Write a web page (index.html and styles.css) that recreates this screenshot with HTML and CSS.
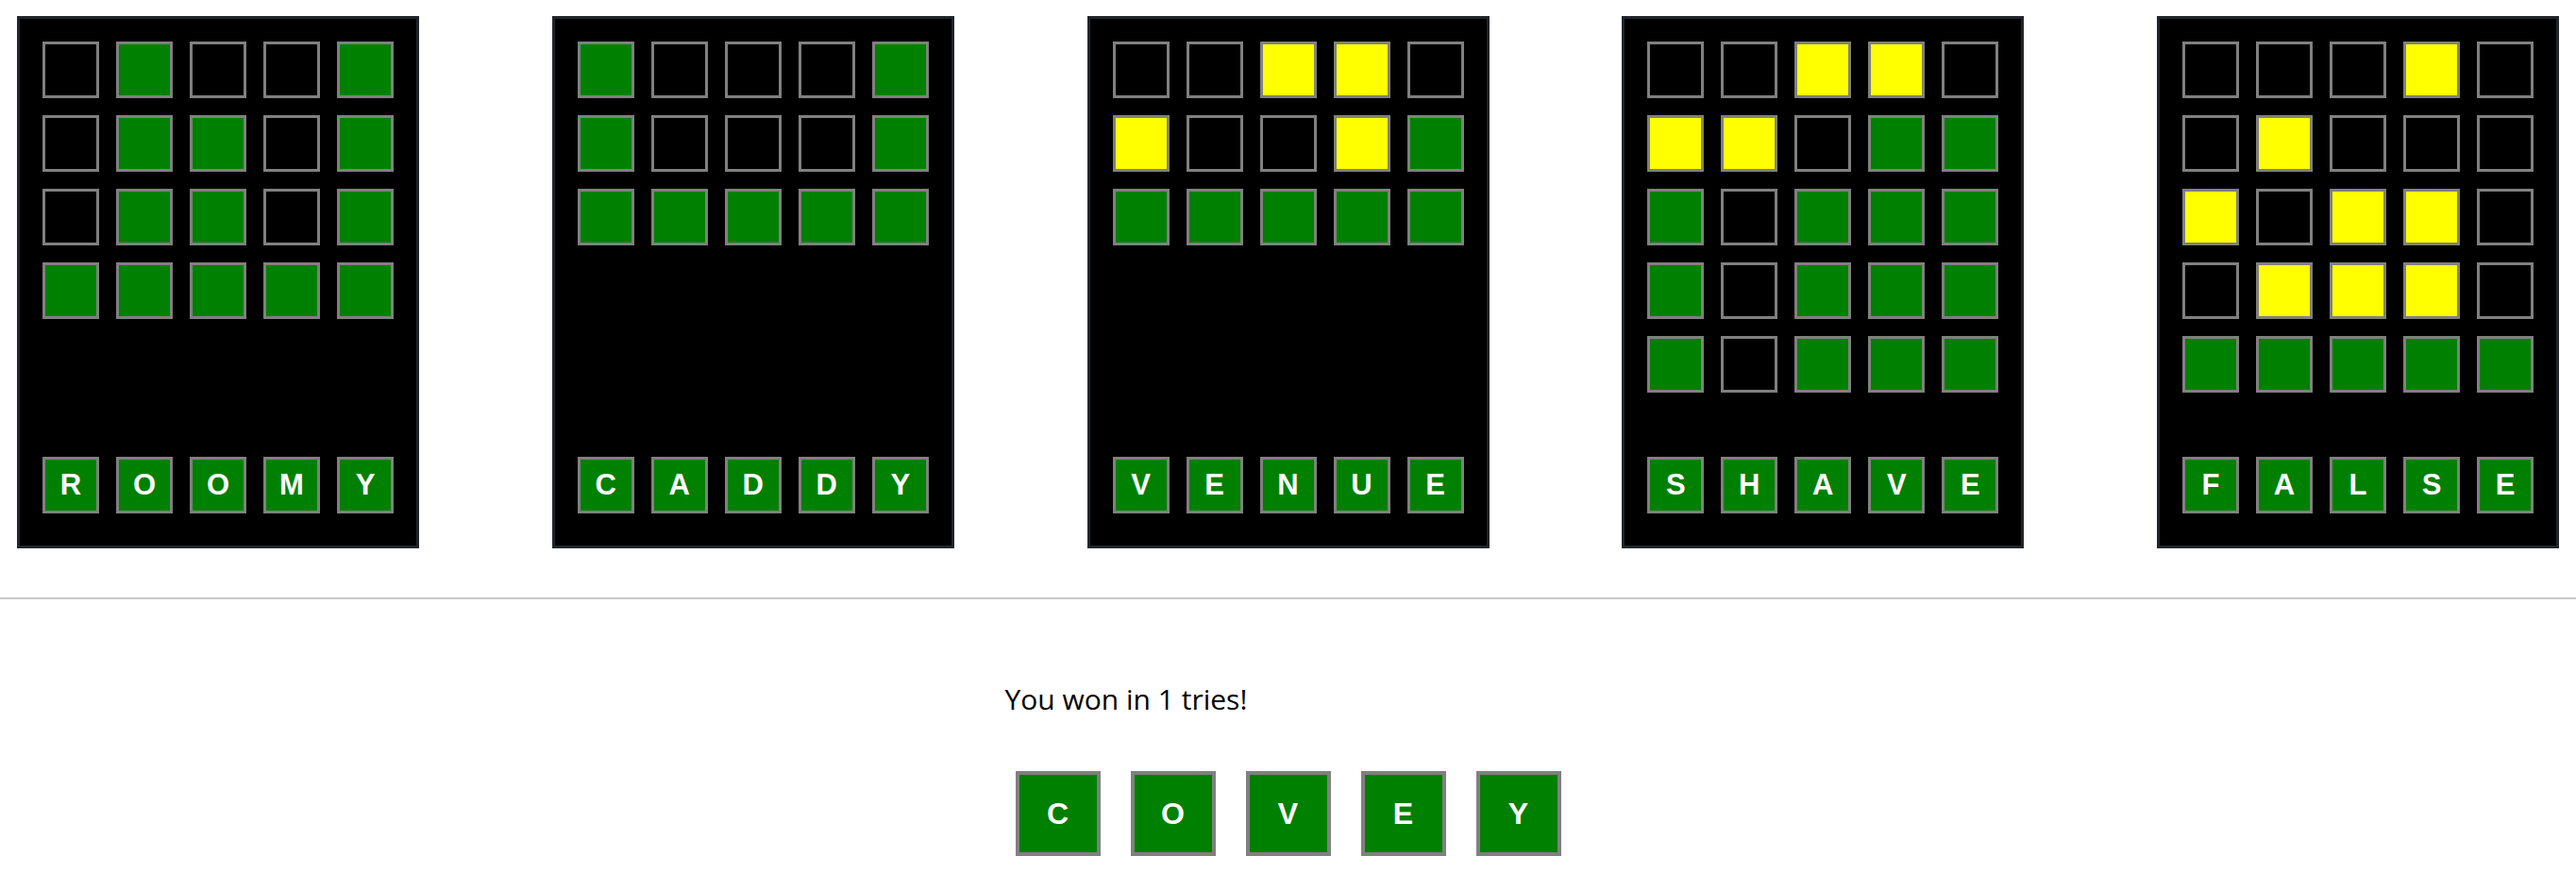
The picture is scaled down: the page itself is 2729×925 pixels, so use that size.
FILE: index.html
```html
<!DOCTYPE html>
<html lang="en">
<head>
<meta charset="utf-8">
<title>Wordle boards</title>
<link rel="stylesheet" href="styles.css">
</head>
<body>
<div class="boards">
  <div class="board">
    <div class="guesses">
      <div class="row"><div class="tile"></div><div class="tile g"></div><div class="tile"></div><div class="tile"></div><div class="tile g"></div></div>
      <div class="row"><div class="tile"></div><div class="tile g"></div><div class="tile g"></div><div class="tile"></div><div class="tile g"></div></div>
      <div class="row"><div class="tile"></div><div class="tile g"></div><div class="tile g"></div><div class="tile"></div><div class="tile g"></div></div>
      <div class="row"><div class="tile g"></div><div class="tile g"></div><div class="tile g"></div><div class="tile g"></div><div class="tile g"></div></div>
    </div>
    <div class="row answer"><div class="tile g">R</div><div class="tile g">O</div><div class="tile g">O</div><div class="tile g">M</div><div class="tile g">Y</div></div>
  </div>
  <div class="board">
    <div class="guesses">
      <div class="row"><div class="tile g"></div><div class="tile"></div><div class="tile"></div><div class="tile"></div><div class="tile g"></div></div>
      <div class="row"><div class="tile g"></div><div class="tile"></div><div class="tile"></div><div class="tile"></div><div class="tile g"></div></div>
      <div class="row"><div class="tile g"></div><div class="tile g"></div><div class="tile g"></div><div class="tile g"></div><div class="tile g"></div></div>
    </div>
    <div class="row answer"><div class="tile g">C</div><div class="tile g">A</div><div class="tile g">D</div><div class="tile g">D</div><div class="tile g">Y</div></div>
  </div>
  <div class="board">
    <div class="guesses">
      <div class="row"><div class="tile"></div><div class="tile"></div><div class="tile y"></div><div class="tile y"></div><div class="tile"></div></div>
      <div class="row"><div class="tile y"></div><div class="tile"></div><div class="tile"></div><div class="tile y"></div><div class="tile g"></div></div>
      <div class="row"><div class="tile g"></div><div class="tile g"></div><div class="tile g"></div><div class="tile g"></div><div class="tile g"></div></div>
    </div>
    <div class="row answer"><div class="tile g">V</div><div class="tile g">E</div><div class="tile g">N</div><div class="tile g">U</div><div class="tile g">E</div></div>
  </div>
  <div class="board">
    <div class="guesses">
      <div class="row"><div class="tile"></div><div class="tile"></div><div class="tile y"></div><div class="tile y"></div><div class="tile"></div></div>
      <div class="row"><div class="tile y"></div><div class="tile y"></div><div class="tile"></div><div class="tile g"></div><div class="tile g"></div></div>
      <div class="row"><div class="tile g"></div><div class="tile"></div><div class="tile g"></div><div class="tile g"></div><div class="tile g"></div></div>
      <div class="row"><div class="tile g"></div><div class="tile"></div><div class="tile g"></div><div class="tile g"></div><div class="tile g"></div></div>
      <div class="row"><div class="tile g"></div><div class="tile"></div><div class="tile g"></div><div class="tile g"></div><div class="tile g"></div></div>
    </div>
    <div class="row answer"><div class="tile g">S</div><div class="tile g">H</div><div class="tile g">A</div><div class="tile g">V</div><div class="tile g">E</div></div>
  </div>
  <div class="board">
    <div class="guesses">
      <div class="row"><div class="tile"></div><div class="tile"></div><div class="tile"></div><div class="tile y"></div><div class="tile"></div></div>
      <div class="row"><div class="tile"></div><div class="tile y"></div><div class="tile"></div><div class="tile"></div><div class="tile"></div></div>
      <div class="row"><div class="tile y"></div><div class="tile"></div><div class="tile y"></div><div class="tile y"></div><div class="tile"></div></div>
      <div class="row"><div class="tile"></div><div class="tile y"></div><div class="tile y"></div><div class="tile y"></div><div class="tile"></div></div>
      <div class="row"><div class="tile g"></div><div class="tile g"></div><div class="tile g"></div><div class="tile g"></div><div class="tile g"></div></div>
    </div>
    <div class="row answer"><div class="tile g">F</div><div class="tile g">A</div><div class="tile g">L</div><div class="tile g">S</div><div class="tile g">E</div></div>
  </div>
</div>
<hr class="divider">
<div class="result">
  <p class="message">You won in 1 tries!</p>
  <div class="final">
    <div class="big">C</div><div class="big">O</div><div class="big">V</div><div class="big">E</div><div class="big">Y</div>
  </div>
</div>
</body>
</html>
```
FILE: styles.css
```css
html, body {
  margin: 0;
  padding: 0;
  background: #fff;
}
body {
  font-family: "Open Sans", "Noto Sans", sans-serif;
  color: #000;
}
.boards {
  display: flex;
  justify-content: space-between;
  padding: 17px 18px 0;
}
.board {
  width: 426px;
  height: 564px;
  box-sizing: border-box;
  border: 3px solid #212529;
  background: #000;
  padding: 24px 24px 34px;
  display: flex;
  flex-direction: column;
  justify-content: space-between;
}
.guesses {
  display: flex;
  flex-direction: column;
  gap: 18px;
}
.row {
  display: flex;
  gap: 18px;
}
.tile {
  width: 60px;
  height: 60px;
  box-sizing: border-box;
  border: 3px solid #808080;
  background: #000;
  display: flex;
  align-items: center;
  justify-content: center;
  color: #fff;
  font-family: "Liberation Sans", Arial, sans-serif;
  font-weight: bold;
  font-size: 31px;
}
.tile.g { background: #008000; }
.tile.y { background: #ffff00; }
.divider {
  border: none;
  height: 2px;
  background: #c8c8c8;
  margin: 52px 0 0;
}
.result {
  width: 600px;
  margin: 0 auto;
  padding-top: 87px;
}
.message {
  margin: 0;
  font-size: 30px;
  line-height: 38px;
}
.final {
  display: flex;
  justify-content: center;
  gap: 32px;
  margin-top: 57px;
}
.big {
  width: 90px;
  height: 90px;
  box-sizing: border-box;
  border: 4px solid #808080;
  background: #008000;
  display: flex;
  align-items: center;
  justify-content: center;
  color: #fff;
  font-family: "Liberation Sans", Arial, sans-serif;
  font-weight: bold;
  font-size: 32px;
}
```
